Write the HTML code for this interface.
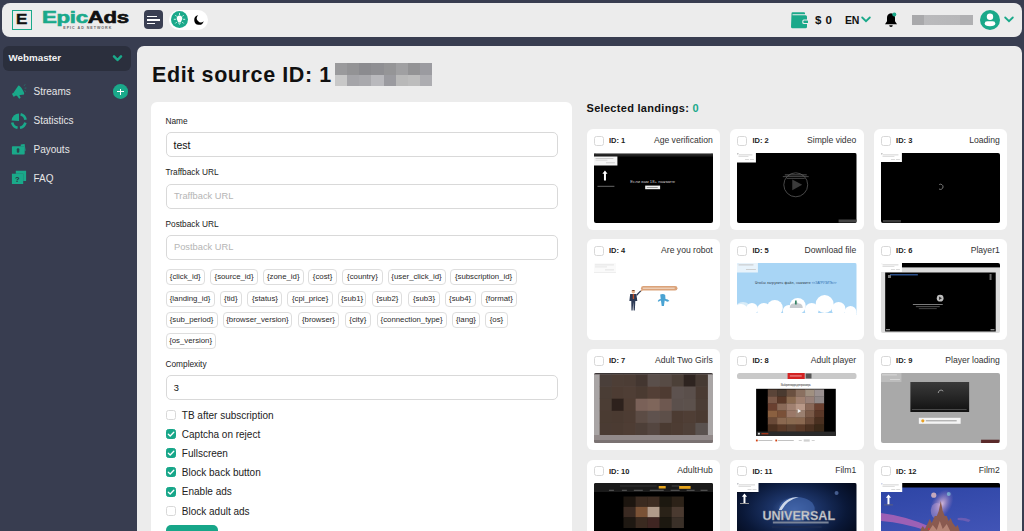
<!DOCTYPE html>
<html><head><meta charset="utf-8">
<style>
*{box-sizing:border-box;margin:0;padding:0}
html,body{width:1024px;height:531px;overflow:hidden}
body{background:#383d50;font-family:"Liberation Sans",sans-serif;position:relative;color:#1e1e24}
.a{position:absolute}
#hdr{left:2px;top:3px;width:1020px;height:33.5px;background:#ececec;border-radius:8px}
#main{left:137px;top:46px;width:885px;height:500px;background:#ececec;border-radius:7px}
#wm{left:3px;top:46px;width:128px;height:25px;background:#2b2f3d;border-radius:6px}
.card{background:#fff;border-radius:6px}
.lbl{font-size:8.3px;color:#222;line-height:10px;white-space:nowrap}
.inp{border:1px solid #d9d9d9;border-radius:5px;background:#fff;height:25px;width:392px;left:165.5px}
.ph{font-size:9.3px;color:#b5b5b5;line-height:12px;white-space:nowrap}
.chip{height:16px;border:1px solid #dedede;border-radius:4px;font-size:7.8px;color:#2a2a2a;line-height:14px;text-align:center;white-space:nowrap}
.cb{width:10px;height:10px;border:1px solid #d8d8d8;border-radius:2.5px;background:#fff}
.cb.on{background:#17a689;border-color:#17a689}
.cbl{font-size:10px;color:#222;white-space:nowrap}
.lc{width:133.5px;height:100.5px;background:#fff;border-radius:6px}
.lc .c{left:7.3px;top:6.6px;width:10px;height:10px;border:1px solid #d8d8d8;border-radius:2.5px}
.lc .id{left:22.5px;top:7px;font-size:7.5px;font-weight:bold;color:#222}
.lc .t{right:7.3px;top:5.8px;font-size:8.6px;color:#333;white-space:nowrap}
.lc .th{left:7.2px;top:23.5px;width:119.5px;height:70px;border-radius:2px;overflow:hidden;display:block}
</style></head><body>
<div id="hdr" class="a"></div>
<div class="a" style="left:12px;top:10px;width:20px;height:20px;border:1.2px solid #1aa98a"></div>
<div class="a" style="left:15.7px;top:9.3px;font-size:15.5px;font-weight:bold;color:#111;line-height:20px;transform:scaleX(1.1);transform-origin:0 0;-webkit-text-stroke:0.4px">E</div>
<div class="a" style="left:42px;top:8.3px;font-size:16px;font-weight:bold;line-height:20px;transform:scaleX(1.385);transform-origin:0 0;letter-spacing:-0.2px;-webkit-text-stroke:0.6px;white-space:nowrap"><span style="color:#1aa98a">Epic</span><span style="color:#111">Ads</span></div>
<div class="a" style="left:63.3px;top:25.8px;font-size:3.6px;font-weight:bold;color:#666;letter-spacing:1.0px;line-height:4px;white-space:nowrap">EPIC AD NETWORK</div>
<div class="a" style="left:143.5px;top:10px;width:19px;height:19px;background:#3a3f52;border-radius:4px"></div>
<div class="a" style="left:147px;top:15.5px;width:9.5px;height:1.5px;background:#fff"></div>
<div class="a" style="left:147px;top:19px;width:12.5px;height:1.5px;background:#fff"></div>
<div class="a" style="left:147px;top:22.7px;width:7.5px;height:1.5px;background:#fff"></div>
<div class="a" style="left:169px;top:10px;width:38.5px;height:19.5px;background:#fff;border-radius:10px"></div>
<div class="a" style="left:171px;top:11px;width:17px;height:17px;background:#1aa98a;border-radius:50%"></div>
<svg class="a" style="left:171px;top:11px" width="17" height="17" viewBox="0 0 17 17">
<g stroke="#fff" stroke-width="0.8" stroke-linecap="round">
<line x1="8.5" y1="2.3" x2="8.5" y2="3.6"/><line x1="3.2" y1="8.3" x2="4.5" y2="8.3"/><line x1="12.5" y1="8.3" x2="13.8" y2="8.3"/>
<line x1="4.6" y1="4.4" x2="5.5" y2="5.3"/><line x1="12.4" y1="4.4" x2="11.5" y2="5.3"/>
<line x1="4.6" y1="12.2" x2="5.5" y2="11.3"/><line x1="12.4" y1="12.2" x2="11.5" y2="11.3"/></g>
<path d="M8.5 4.6 C6.6 4.6 5.7 6 5.7 7.5 C5.7 9 6.8 9.8 7 11 L10 11 C10.2 9.8 11.3 9 11.3 7.5 C11.3 6 10.4 4.6 8.5 4.6Z M7.2 11.6 H9.8 V12.6 H7.2Z M7.8 13 H9.2 L8.5 13.8Z" fill="#fff"/>
</svg>
<svg class="a" style="left:193.5px;top:15px" width="10" height="10" viewBox="0 0 10 10"><path d="M4.2 0.3 A4.8 4.8 0 1 0 9.7 6.2 A3.9 3.9 0 0 1 4.2 0.3Z" fill="#000"/></svg>
<svg class="a" style="left:789.5px;top:12px" width="18" height="17" viewBox="0 0 18 17">
<path d="M1.5 1.5 Q1.5 0.3 2.7 0.3 H14 Q15 0.3 15 1.3 V2.2 H2.5 V3.2 H15.5 Q17 3.2 17 4.7 V14.8 Q17 16.3 15.5 16.3 H2.5 Q1 16.3 1 14.8 Z" fill="#1aa98a"/>
<rect x="12.3" y="7.6" width="6" height="4.4" rx="1.5" fill="#ececec"/><rect x="13.3" y="8.5" width="5" height="2.6" rx="1" fill="#1aa98a"/>
</svg>
<div class="a" style="left:815px;top:12.5px;font-size:11.5px;font-weight:bold;color:#111;line-height:14px;white-space:nowrap;letter-spacing:0.5px">$ 0</div>
<div class="a" style="left:845px;top:12.5px;font-size:10.5px;letter-spacing:-0.2px;font-weight:bold;color:#111;line-height:14px">EN</div>
<svg class="a" style="left:861px;top:16px" width="10" height="7" viewBox="0 0 10 7"><path d="M1.2 1.5 L5 5.2 L8.8 1.5" stroke="#1aa98a" stroke-width="1.8" fill="none" stroke-linecap="round"/></svg>
<svg class="a" style="left:884px;top:12px" width="14" height="16" viewBox="0 0 14 16">
<path d="M7 1.2 C4.3 1.2 3 3.4 3 5.8 V9.2 L1 12.2 H13 L11 9.2 V5.8 C11 3.4 9.7 1.2 7 1.2Z" fill="#000"/><path d="M5.2 13.2 A1.8 1.8 0 0 0 8.8 13.2Z" fill="#000"/>
<circle cx="10.3" cy="2.6" r="2" fill="#1aa98a"/></svg>
<div class="a" style="left:912px;top:15px;width:61px;height:10px;background:linear-gradient(90deg,#a9a9ab 0,#a9a9ab 12px,#bababc 12px,#b7b7b9 48px,#b0b0b2 48px)"></div>
<div class="a" style="left:979.8px;top:9.8px;width:20px;height:20px;background:#1aa98a;border-radius:50%"></div>
<svg class="a" style="left:979.8px;top:9.8px" width="20" height="20" viewBox="0 0 20 20"><circle cx="10" cy="6.8" r="3.2" fill="#fff"/><path d="M4.7 13.6 Q4.7 11.2 7.2 11.2 H12.8 Q15.3 11.2 15.3 13.6 Q15.3 16.2 10 16.2 Q4.7 16.2 4.7 13.6Z" fill="#fff"/></svg>
<svg class="a" style="left:1004px;top:16px" width="10" height="7" viewBox="0 0 10 7"><path d="M1.2 1.5 L5 5.2 L8.8 1.5" stroke="#1aa98a" stroke-width="1.8" fill="none" stroke-linecap="round"/></svg>
<div id="wm" class="a"></div>
<div class="a" style="left:8.5px;top:51.3px;font-size:9.8px;font-weight:bold;color:#f2f2f2;line-height:14px">Webmaster</div>
<svg class="a" style="left:112px;top:54.3px" width="11" height="9" viewBox="0 0 11 9"><path d="M2 2.4 L5.5 6 L9 2.4" stroke="#1aa98a" stroke-width="2.5" fill="none" stroke-linecap="round" stroke-linejoin="round"/></svg>
<div class="a" style="left:33.5px;top:85.2px;font-size:10px;color:#e6e6e6;line-height:14px">Streams</div>
<div class="a" style="left:33.5px;top:114.4px;font-size:10px;color:#e6e6e6;line-height:14px">Statistics</div>
<div class="a" style="left:33.5px;top:143.4px;font-size:10px;color:#e6e6e6;line-height:14px">Payouts</div>
<div class="a" style="left:33.5px;top:172.0px;font-size:10px;color:#e6e6e6;line-height:14px">FAQ</div>
<div class="a" style="left:113.2px;top:84.4px;width:14.6px;height:14.6px;border-radius:50%;background:#1aa98a"></div>
<div class="a" style="left:117.3px;top:91.1px;width:6.4px;height:1.2px;background:#fff"></div>
<div class="a" style="left:119.9px;top:88.5px;width:1.2px;height:6.4px;background:#fff"></div>
<svg class="a" style="left:11px;top:84px" width="16" height="16" viewBox="0 0 16 16">
<g transform="rotate(-32 7 8)" fill="#1aa98a"><rect x="0.8" y="6.3" width="2.6" height="3.6" rx="0.6"/><path d="M3 6.2 L10.5 2.8 L10.5 13.2 L3 9.9Z"/><ellipse cx="10.6" cy="8" rx="1.4" ry="5.2"/><path d="M4 9.5 L6.6 10.6 L6.2 14.4 L4.4 14.4Z"/></g>
<path d="M12.8 1.6 L14.4 0.6 M13.6 4.2 L15.4 4 M13.4 6.6 L15 7.6" stroke="#1aa98a" stroke-width="0.8" opacity="0.55"/></svg>
<svg class="a" style="left:11px;top:113px" width="16" height="16" viewBox="0 0 16 16">
<path d="M8 8 L8 0.6 A7.4 7.4 0 0 0 0.6 7.6Z" fill="#1aa98a"/>
<path d="M9.6 1.3 A7 7 0 0 1 14.6 6.8" stroke="#1aa98a" stroke-width="2.6" fill="none"/>
<path d="M14.4 9.6 A7 7 0 0 1 9 14.8" stroke="#1aa98a" stroke-width="2.6" fill="none"/>
<path d="M6.6 14.8 A7 7 0 0 1 1.2 9.4" stroke="#1aa98a" stroke-width="2.6" fill="none"/>
</svg>
<svg class="a" style="left:11px;top:142px" width="16" height="15" viewBox="0 0 16 15">
<rect x="0.9" y="4.3" width="12.8" height="8.3" rx="0.8" fill="#1aa98a"/>
<path d="M9.7 2.4 L13.6 1.9 L14.6 8.7 L13.7 8.7 L13.2 4.3 L9.7 4.3Z" fill="#1aa98a"/>
<rect x="5.8" y="6.3" width="2.5" height="4.4" rx="1" fill="#2c3140" opacity="0.8"/></svg>
<svg class="a" style="left:11px;top:170px" width="16" height="16" viewBox="0 0 16 16">
<path d="M4.8 0.8 H15.1 V11.1 H12.2 V3.7 H4.8Z" fill="#1aa98a"/>
<rect x="0.9" y="3.7" width="11.3" height="10.3" fill="#1aa98a"/>
<text x="6.4" y="11.6" font-size="7.5" font-weight="bold" fill="#2c3140" text-anchor="middle" font-family="Liberation Sans">?</text></svg>
<div id="main" class="a"></div>
<div class="a" style="left:152px;top:60px;font-size:21.5px;font-weight:bold;color:#111;line-height:30px;letter-spacing:0.6px;white-space:nowrap">Edit source ID: 1</div>
<div class="a" style="left:335px;top:63px;width:97px;height:23px;display:grid;grid-template-columns:repeat(8,1fr);grid-template-rows:11.5px 11.5px">
<i style="background:#9a9a9c"></i><i style="background:#939395"></i><i style="background:#8b8b8f"></i><i style="background:#8f8f93"></i><i style="background:#959597"></i><i style="background:#a0a0a2"></i><i style="background:#939395"></i><i style="background:#9b9ba0"></i>
<i style="background:#c8c8c8"></i><i style="background:#a5a5a9"></i><i style="background:#a9a9ad"></i><i style="background:#b9b9bd"></i><i style="background:#9b9ba0"></i><i style="background:#b9b9b9"></i><i style="background:#bdbdbd"></i><i style="background:#adadb1"></i>
</div>
<div class="a card" style="left:151px;top:101.5px;width:421px;height:460px"></div>
<div class="a lbl" style="left:165.5px;top:115.5px">Name</div>
<div class="a inp" style="top:132.3px"></div>
<div class="a" style="left:173.5px;top:137.8px;font-size:10.5px;color:#111;line-height:14px">test</div>
<div class="a lbl" style="left:165.5px;top:167.2px">Traffback URL</div>
<div class="a inp" style="top:183.7px"></div>
<div class="a ph" style="left:174px;top:190.2px">Traffback URL</div>
<div class="a lbl" style="left:165.5px;top:218.6px">Postback URL</div>
<div class="a inp" style="top:234.7px"></div>
<div class="a ph" style="left:174px;top:241.2px">Postback URL</div>
<div class="a chip" style="left:165.5px;top:269.4px;width:39.4px">{click_id}</div>
<div class="a chip" style="left:210.4px;top:269.4px;width:47.3px">{source_id}</div>
<div class="a chip" style="left:262.9px;top:269.4px;width:40.7px">{zone_id}</div>
<div class="a chip" style="left:308.4px;top:269.4px;width:28.4px">{cost}</div>
<div class="a chip" style="left:342.3px;top:269.4px;width:40.3px">{country}</div>
<div class="a chip" style="left:387.5px;top:269.4px;width:58.0px">{user_click_id}</div>
<div class="a chip" style="left:450.3px;top:269.4px;width:66.5px">{subscription_id}</div>
<div class="a chip" style="left:165.5px;top:290.7px;width:49.2px">{landing_id}</div>
<div class="a chip" style="left:219.6px;top:290.7px;width:22.4px">{tid}</div>
<div class="a chip" style="left:247.3px;top:290.7px;width:35.2px">{status}</div>
<div class="a chip" style="left:287.3px;top:290.7px;width:45.6px">{cpl_price}</div>
<div class="a chip" style="left:337.7px;top:290.7px;width:28.7px">{sub1}</div>
<div class="a chip" style="left:372.2px;top:290.7px;width:30.3px">{sub2}</div>
<div class="a chip" style="left:408.4px;top:290.7px;width:31.2px">{sub3}</div>
<div class="a chip" style="left:444.5px;top:290.7px;width:31.2px">{sub4}</div>
<div class="a chip" style="left:481px;top:290.7px;width:36.3px">{format}</div>
<div class="a chip" style="left:165.5px;top:312.1px;width:52.1px">{sub_period}</div>
<div class="a chip" style="left:222.5px;top:312.1px;width:69.9px">{browser_version}</div>
<div class="a chip" style="left:297.7px;top:312.1px;width:41.6px">{browser}</div>
<div class="a chip" style="left:344.6px;top:312.1px;width:26.4px">{city}</div>
<div class="a chip" style="left:376.5px;top:312.1px;width:70.1px">{connection_type}</div>
<div class="a chip" style="left:452px;top:312.1px;width:28.0px">{lang}</div>
<div class="a chip" style="left:485.3px;top:312.1px;width:22.4px">{os}</div>
<div class="a chip" style="left:165.5px;top:333.2px;width:50.2px">{os_version}</div>
<div class="a lbl" style="left:165.5px;top:358.8px">Complexity</div>
<div class="a inp" style="top:375px"></div>
<div class="a" style="left:173.8px;top:382.3px;font-size:9.3px;color:#111;line-height:12px">3</div>
<div class="a cb" style="left:165.5px;top:410.0px"></div>
<div class="a cbl" style="left:181.8px;top:409.5px;line-height:12px">TB after subscription</div>
<div class="a cb on" style="left:165.5px;top:429.1px"></div>
<svg class="a" style="left:165.5px;top:429.1px" width="10" height="10" viewBox="0 0 10 10"><path d="M2.3 5.2 L4.2 7 L7.8 3.2" stroke="#fff" stroke-width="1.3" fill="none" stroke-linecap="round" stroke-linejoin="round"/></svg>
<div class="a cbl" style="left:181.8px;top:428.7px;line-height:12px">Captcha on reject</div>
<div class="a cb on" style="left:165.5px;top:448.2px"></div>
<svg class="a" style="left:165.5px;top:448.2px" width="10" height="10" viewBox="0 0 10 10"><path d="M2.3 5.2 L4.2 7 L7.8 3.2" stroke="#fff" stroke-width="1.3" fill="none" stroke-linecap="round" stroke-linejoin="round"/></svg>
<div class="a cbl" style="left:181.8px;top:447.9px;line-height:12px">Fullscreen</div>
<div class="a cb on" style="left:165.5px;top:467.4px"></div>
<svg class="a" style="left:165.5px;top:467.4px" width="10" height="10" viewBox="0 0 10 10"><path d="M2.3 5.2 L4.2 7 L7.8 3.2" stroke="#fff" stroke-width="1.3" fill="none" stroke-linecap="round" stroke-linejoin="round"/></svg>
<div class="a cbl" style="left:181.8px;top:467.2px;line-height:12px">Block back button</div>
<div class="a cb on" style="left:165.5px;top:486.5px"></div>
<svg class="a" style="left:165.5px;top:486.5px" width="10" height="10" viewBox="0 0 10 10"><path d="M2.3 5.2 L4.2 7 L7.8 3.2" stroke="#fff" stroke-width="1.3" fill="none" stroke-linecap="round" stroke-linejoin="round"/></svg>
<div class="a cbl" style="left:181.8px;top:486.4px;line-height:12px">Enable ads</div>
<div class="a cb" style="left:165.5px;top:505.6px"></div>
<div class="a cbl" style="left:181.8px;top:505.6px;line-height:12px">Block adult ads</div>
<div class="a" style="left:165.5px;top:525px;width:52.5px;height:20px;background:#17a689;border-radius:5px"></div>
<!--LAND-->
<div class="a" style="left:586.5px;top:100.5px;font-size:11px;font-weight:bold;color:#111;line-height:14px;letter-spacing:0.3px;white-space:nowrap">Selected landings: <span style="color:#1aa98a">0</span></div>
<div class="a lc" style="left:586.5px;top:129.2px"><div class="a c"></div><div class="a id">ID: 1</div><div class="a t">Age verification</div><svg class="a th" viewBox="0 0 120 70" preserveAspectRatio="none"><rect x="0" y="0" width="120" height="70" fill="#000" /><rect x="0" y="0" width="120" height="3.5" fill="#1e1e1e" /><rect x="0" y="0" width="120" height="1.1" fill="#8a8a8a" /><rect x="0" y="3.5" width="23.5" height="9" fill="#f4f4f4" /><rect x="1.5" y="5" width="18" height="0.7" fill="#bbb" /><rect x="1.5" y="6.8" width="12" height="0.7" fill="#ccc" /><rect x="12" y="9.5" width="9" height="0.7" fill="#bbb" /><path d="M11 17.5 L8.4 20.7 H10 V27.5 H12 V20.7 H13.6Z" fill="#fff"/><rect x="3.5" y="32.8" width="17" height="1" fill="#666" /><text x="59" y="30.3" font-family="Liberation Sans" font-size="4.2" fill="#c8c8c8" text-anchor="middle" textLength="45">Если вам 18+ нажмите</text><rect x="51.4" y="32.6" width="15" height="3.6" fill="#f0f0f0" /><rect x="53" y="34" width="11" height="0.8" fill="#888" /></svg></div>
<div class="a lc" style="left:730px;top:129.2px"><div class="a c"></div><div class="a id">ID: 2</div><div class="a t">Simple video</div><svg class="a th" viewBox="0 0 120 70" preserveAspectRatio="none"><rect x="0" y="0" width="120" height="70" fill="#000" /><rect x="0" y="0" width="19" height="9.5" fill="#fff" /><rect x="1.5" y="1.5" width="14" height="0.8" fill="#c8c8c8" /><rect x="1.5" y="3.2" width="10" height="0.8" fill="#d8d8d8" /><rect x="8" y="6" width="4" height="0.8" fill="#d0d0d0" /><rect x="13" y="6" width="4" height="0.8" fill="#d0d0d0" /><circle cx="59" cy="31.8" r="12" fill="none" stroke="#505050" stroke-width="0.9"/><path d="M55.5 26.5 L65.5 31.8 L55.5 37.2Z" fill="#3a3a3a"/><rect x="48" y="21.5" width="22" height="0.8" fill="#6a6a6a" /><rect x="46" y="23.3" width="26" height="0.8" fill="#5a5a5a" /><rect x="50" y="25.1" width="18" height="0.8" fill="#4a4a4a" /><rect x="102" y="66.5" width="18" height="3" fill="#444" /></svg></div>
<div class="a lc" style="left:873.6px;top:129.2px"><div class="a c"></div><div class="a id">ID: 3</div><div class="a t">Loading</div><svg class="a th" viewBox="0 0 120 70" preserveAspectRatio="none"><rect x="0" y="0" width="120" height="70" fill="#000" /><rect x="0" y="0" width="21" height="9" fill="#fff" /><rect x="1.5" y="1.5" width="16" height="0.8" fill="#c8c8c8" /><rect x="1.5" y="3.2" width="12" height="0.8" fill="#d8d8d8" /><rect x="10" y="6" width="4" height="0.8" fill="#d0d0d0" /><rect x="15" y="6" width="4" height="0.8" fill="#d0d0d0" /><path d="M58.5 31.5 A2.6 2.6 0 1 1 58.3 36" fill="none" stroke="#888" stroke-width="0.9"/><rect x="2" y="67" width="18" height="2.5" fill="#3a3a3a" /></svg></div>
<div class="a lc" style="left:586.5px;top:239.3px"><div class="a c"></div><div class="a id">ID: 4</div><div class="a t">Are you robot</div><svg class="a th" viewBox="0 0 120 70" preserveAspectRatio="none"><rect x="0" y="0" width="120" height="70" fill="#fff" /><rect x="0" y="0" width="22" height="10" fill="#fafafa" /><rect x="1" y="1.5" width="19" height="0.8" fill="#ddd" /><rect x="1" y="3.5" width="12" height="0.8" fill="#e2e2e2" /><rect x="11" y="6.5" width="9" height="0.8" fill="#ddd" /><rect x="0" y="9.2" width="22" height="0.6" fill="#e6e6e6" /><rect x="47.2" y="22.9" width="36.6" height="4.7" rx="2.3" fill="#dba37a"/><rect x="49" y="24.6" width="32" height="1.2" fill="#f0d8c4" /><path d="M47.5 26.5 L45.5 30 L49.5 27Z" fill="#dba37a"/><circle cx="39.5" cy="28.8" r="1.8" fill="#e8b48f"/><path d="M37.6 28 Q39.5 25.8 41.4 28Z" fill="#6b3c22"/><path d="M36.3 31 H42.5 L43.5 38 H41.5 L41 47.5 H39.8 L39.4 39 L38.8 47.5 H37.6 L37.4 38 H35.5Z" fill="#2d3a55"/><rect x="38.9" y="31" width="1.4" height="5" fill="#c0532b" /><path d="M42.5 31.5 L46.5 27.5 L47.3 28.2 L43 33Z" fill="#2d3a55"/><path d="M66.5 31.5 Q69.8 30.5 71.5 32 L71.8 36 Q74.5 36 75.8 38 L73.5 38.8 L71 37.5 L70.2 43 L68 43 L67.2 37.5 L64.5 38.8 L64 38 Q65 36 67 36Z" fill="#4aa3d3"/></svg></div>
<div class="a lc" style="left:730px;top:239.3px"><div class="a c"></div><div class="a id">ID: 5</div><div class="a t">Download file</div><svg class="a th" viewBox="0 0 120 70" preserveAspectRatio="none"><rect x="0" y="0" width="120" height="70" fill="#fff" /><rect x="0" y="0" width="120" height="52" fill="#a8d5f5" /><ellipse cx="6" cy="46" rx="8" ry="7" fill="#d8ecf8"/><circle cx="4" cy="48" r="7" fill="#fff"/><circle cx="15" cy="46" r="6" fill="#fff"/><circle cx="27" cy="47" r="7" fill="#fff"/><circle cx="38" cy="45" r="8" fill="#fff"/><circle cx="52" cy="48" r="6" fill="#fff"/><circle cx="61" cy="43" r="8" fill="#fff"/><circle cx="75" cy="47" r="7" fill="#fff"/><circle cx="88" cy="41" r="9" fill="#fff"/><circle cx="102" cy="46" r="7" fill="#fff"/><circle cx="114" cy="49" r="6" fill="#fff"/><rect x="0" y="50" width="120" height="20" fill="#fff" /><rect x="0" y="0" width="21" height="9.5" fill="#e8f3fb" /><rect x="1.5" y="1.5" width="15" height="0.8" fill="#bbb" /><rect x="9" y="6" width="10" height="0.8" fill="#c6c6c6" /><text x="18" y="21" font-family="Liberation Sans" font-size="3.4" fill="#2a3440" textLength="56">Чтобы загрузить файл, нажмите</text><text x="75" y="21" font-family="Liberation Sans" font-size="3.4" fill="#2f6fb0" textLength="25">&lt;&lt;ЗАГРУЗИТЬ&gt;&gt;</text><path d="M53 45 Q53 40.5 57 40.5 Q59 38 62 40.5 Q66 40.5 66 45Z" fill="#c8ccd0"/><rect x="58.3" y="37.5" width="1.6" height="4" fill="#2d7f5e" /></svg></div>
<div class="a lc" style="left:873.6px;top:239.3px"><div class="a c"></div><div class="a id">ID: 6</div><div class="a t">Player1</div><svg class="a th" viewBox="0 0 120 70" preserveAspectRatio="none"><rect x="0" y="0" width="120" height="70" fill="#dcdcdc" /><rect x="21" y="0" width="99" height="4.4" fill="#000" /><rect x="0" y="0" width="21" height="9" fill="#fff" /><rect x="1.5" y="1.5" width="16" height="0.8" fill="#c8c8c8" /><rect x="1.5" y="3.2" width="12" height="0.8" fill="#d8d8d8" /><rect x="10" y="6" width="4" height="0.8" fill="#d0d0d0" /><rect x="15" y="6" width="4" height="0.8" fill="#d0d0d0" /><rect x="4.2" y="9.5" width="111" height="59" fill="#000" /><rect x="9" y="11" width="28" height="1.5" fill="#2a4f8a" /><rect x="7" y="12" width="3" height="3" fill="#777" /><rect x="109" y="11" width="2" height="6" fill="#666" /><circle cx="59.4" cy="35.2" r="3.4" fill="#bdbdbd"/><path d="M58.3 33.5 L61.2 35.2 L58.3 36.9Z" fill="#333"/><rect x="32" y="41" width="30" height="0.8" fill="#9a9a9a" /><rect x="35" y="43.3" width="24" height="0.8" fill="#6a6a6a" /><rect x="38" y="45.3" width="18" height="0.8" fill="#555" /><rect x="5" y="66" width="4" height="1.4" fill="#888" /><rect x="110" y="66" width="4" height="1.4" fill="#888" /></svg></div>
<div class="a lc" style="left:586.5px;top:349.4px"><div class="a c"></div><div class="a id">ID: 7</div><div class="a t">Adult Two Girls</div><svg class="a th" viewBox="0 0 120 70" preserveAspectRatio="none"><rect x="0" y="0" width="120" height="70" fill="#8e8686" /><rect x="0" y="0" width="120" height="1.5" fill="#3a3535" /><rect x="0" y="1.5" width="6" height="62" fill="#a9a5a5" /><rect x="114" y="1.5" width="6" height="62" fill="#a9a5a5" /><rect x="5.70" y="1.50" width="12.34" height="12.40" fill="#4a3f3a" /><rect x="17.74" y="1.50" width="12.34" height="12.40" fill="#4d3e36" /><rect x="29.78" y="1.50" width="12.34" height="12.40" fill="#4c3d35" /><rect x="41.82" y="1.50" width="12.34" height="12.40" fill="#433630" /><rect x="53.86" y="1.50" width="12.34" height="12.40" fill="#5a4f4b" /><rect x="65.90" y="1.50" width="12.34" height="12.40" fill="#574b45" /><rect x="77.94" y="1.50" width="12.34" height="12.40" fill="#4c4038" /><rect x="89.98" y="1.50" width="12.34" height="12.40" fill="#2e2420" /><rect x="102.02" y="1.50" width="12.34" height="12.40" fill="#463a33" /><rect x="5.70" y="13.60" width="12.34" height="12.40" fill="#4a3d35" /><rect x="17.74" y="13.60" width="12.34" height="12.40" fill="#4d3c33" /><rect x="29.78" y="13.60" width="12.34" height="12.40" fill="#4f3e35" /><rect x="41.82" y="13.60" width="12.34" height="12.40" fill="#4a3a31" /><rect x="53.86" y="13.60" width="12.34" height="12.40" fill="#533f36" /><rect x="65.90" y="13.60" width="12.34" height="12.40" fill="#4e3b32" /><rect x="77.94" y="13.60" width="12.34" height="12.40" fill="#5d524f" /><rect x="89.98" y="13.60" width="12.34" height="12.40" fill="#5a4f4b" /><rect x="102.02" y="13.60" width="12.34" height="12.40" fill="#4a3b33" /><rect x="5.70" y="25.70" width="12.34" height="12.40" fill="#4b3d34" /><rect x="17.74" y="25.70" width="12.34" height="12.40" fill="#2d211c" /><rect x="29.78" y="25.70" width="12.34" height="12.40" fill="#4f3d33" /><rect x="41.82" y="25.70" width="12.34" height="12.40" fill="#7a6158" /><rect x="53.86" y="25.70" width="12.34" height="12.40" fill="#7f665b" /><rect x="65.90" y="25.70" width="12.34" height="12.40" fill="#6e5850" /><rect x="77.94" y="25.70" width="12.34" height="12.40" fill="#5b504c" /><rect x="89.98" y="25.70" width="12.34" height="12.40" fill="#5c514c" /><rect x="102.02" y="25.70" width="12.34" height="12.40" fill="#4b3d35" /><rect x="5.70" y="37.80" width="12.34" height="12.40" fill="#4a3b32" /><rect x="17.74" y="37.80" width="12.34" height="12.40" fill="#4a3a31" /><rect x="29.78" y="37.80" width="12.34" height="12.40" fill="#4d3c33" /><rect x="41.82" y="37.80" width="12.34" height="12.40" fill="#5c4c45" /><rect x="53.86" y="37.80" width="12.34" height="12.40" fill="#5f524e" /><rect x="65.90" y="37.80" width="12.34" height="12.40" fill="#5d4f49" /><rect x="77.94" y="37.80" width="12.34" height="12.40" fill="#4c3b32" /><rect x="89.98" y="37.80" width="12.34" height="12.40" fill="#4f3e35" /><rect x="102.02" y="37.80" width="12.34" height="12.40" fill="#4a3a31" /><rect x="5.70" y="49.90" width="12.34" height="12.40" fill="#4a3b33" /><rect x="17.74" y="49.90" width="12.34" height="12.40" fill="#4b3b32" /><rect x="29.78" y="49.90" width="12.34" height="12.40" fill="#4e3d34" /><rect x="41.82" y="49.90" width="12.34" height="12.40" fill="#4d3f38" /><rect x="53.86" y="49.90" width="12.34" height="12.40" fill="#544640" /><rect x="65.90" y="49.90" width="12.34" height="12.40" fill="#4a3a31" /><rect x="77.94" y="49.90" width="12.34" height="12.40" fill="#4d3c33" /><rect x="89.98" y="49.90" width="12.34" height="12.40" fill="#4f4038" /><rect x="102.02" y="49.90" width="12.34" height="12.40" fill="#5a524f" /><rect x="0" y="62" width="120" height="8" fill="#928a8a" /><rect x="0" y="67" width="120" height="3" fill="#7a7272" /></svg></div>
<div class="a lc" style="left:730px;top:349.4px"><div class="a c"></div><div class="a id">ID: 8</div><div class="a t">Adult player</div><svg class="a th" viewBox="0 0 120 70" preserveAspectRatio="none"><rect x="0" y="0" width="120" height="70" fill="#fff" /><rect x="0" y="0" width="120" height="6" rx="2" fill="#c9c9c9"/><rect x="50.8" y="0" width="17.2" height="6" fill="#d32222" /><rect x="53" y="2.5" width="12" height="0.9" fill="#f3b0b0" /><rect x="69" y="0.5" width="5.8" height="5" fill="#555" /><text x="59" y="13" font-family="Liberation Sans" font-size="3" fill="#555" text-anchor="middle" textLength="30">Выберите видео для просмотра</text><rect x="19.2" y="15.8" width="80" height="47" fill="#000" /><rect x="30.90" y="16.40" width="9.68" height="7.33" fill="#5a4438" /><rect x="40.28" y="16.40" width="9.68" height="7.33" fill="#4a3a30" /><rect x="49.66" y="16.40" width="9.68" height="7.33" fill="#6a5040" /><rect x="59.04" y="16.40" width="9.68" height="7.33" fill="#8a7060" /><rect x="68.42" y="16.40" width="9.68" height="7.33" fill="#a09080" /><rect x="77.80" y="16.40" width="9.68" height="7.33" fill="#9a9090" /><rect x="30.90" y="23.43" width="9.68" height="7.33" fill="#7a5848" /><rect x="40.28" y="23.43" width="9.68" height="7.33" fill="#5a3828" /><rect x="49.66" y="23.43" width="9.68" height="7.33" fill="#8a6a50" /><rect x="59.04" y="23.43" width="9.68" height="7.33" fill="#a08070" /><rect x="68.42" y="23.43" width="9.68" height="7.33" fill="#988078" /><rect x="77.80" y="23.43" width="9.68" height="7.33" fill="#908888" /><rect x="30.90" y="30.46" width="9.68" height="7.33" fill="#6a4030" /><rect x="40.28" y="30.46" width="9.68" height="7.33" fill="#8a6a58" /><rect x="49.66" y="30.46" width="9.68" height="7.33" fill="#a08070" /><rect x="59.04" y="30.46" width="9.68" height="7.33" fill="#b89888" /><rect x="68.42" y="30.46" width="9.68" height="7.33" fill="#8a6858" /><rect x="77.80" y="30.46" width="9.68" height="7.33" fill="#6a4030" /><rect x="30.90" y="37.49" width="9.68" height="7.33" fill="#8a6040" /><rect x="40.28" y="37.49" width="9.68" height="7.33" fill="#7a5038" /><rect x="49.66" y="37.49" width="9.68" height="7.33" fill="#9a7868" /><rect x="59.04" y="37.49" width="9.68" height="7.33" fill="#9a8070" /><rect x="68.42" y="37.49" width="9.68" height="7.33" fill="#7a5a48" /><rect x="77.80" y="37.49" width="9.68" height="7.33" fill="#5a3828" /><rect x="30.90" y="44.52" width="9.68" height="7.33" fill="#6a4a38" /><rect x="40.28" y="44.52" width="9.68" height="7.33" fill="#8a6850" /><rect x="49.66" y="44.52" width="9.68" height="7.33" fill="#8a6a50" /><rect x="59.04" y="44.52" width="9.68" height="7.33" fill="#8a6850" /><rect x="68.42" y="44.52" width="9.68" height="7.33" fill="#6a4a38" /><rect x="77.80" y="44.52" width="9.68" height="7.33" fill="#4a3020" /><rect x="30.90" y="51.55" width="9.68" height="7.33" fill="#4a3020" /><rect x="40.28" y="51.55" width="9.68" height="7.33" fill="#5a3a28" /><rect x="49.66" y="51.55" width="9.68" height="7.33" fill="#5a4030" /><rect x="59.04" y="51.55" width="9.68" height="7.33" fill="#5a3a28" /><rect x="68.42" y="51.55" width="9.68" height="7.33" fill="#4a3020" /><rect x="77.80" y="51.55" width="9.68" height="7.33" fill="#3a2818" /><path d="M61 36 L64.5 38 L61 40Z" fill="#f0f0f0"/><rect x="19.2" y="58.6" width="80" height="4.3" fill="#2a2a2a" /><rect x="21" y="59.8" width="2" height="1.8" fill="#ddd" /><rect x="24.5" y="60.2" width="7" height="1.1" fill="#c03a1a" /><rect x="19" y="66.6" width="1.8" height="1.8" fill="#d04010" /><rect x="21.5" y="67" width="14" height="0.9" fill="#bbb" /><rect x="38.5" y="66.6" width="1.8" height="1.8" fill="#d04010" /><rect x="41" y="67" width="16" height="0.9" fill="#bbb" /><rect x="62" y="67" width="3" height="0.9" fill="#ccc" /><rect x="67" y="66.4" width="6" height="2.2" fill="#d0d0d0" /><rect x="75" y="67" width="3" height="0.9" fill="#ccc" /></svg></div>
<div class="a lc" style="left:873.6px;top:349.4px"><div class="a c"></div><div class="a id">ID: 9</div><div class="a t">Player loading</div><svg class="a th" viewBox="0 0 120 70" preserveAspectRatio="none"><defs><linearGradient id="g9" x1="0" y1="0" x2="0" y2="1"><stop offset="0" stop-color="#3a3a3a"/><stop offset="0.6" stop-color="#222"/><stop offset="1" stop-color="#111"/></linearGradient></defs><rect x="0" y="0" width="120" height="70" fill="#a9a9a9" /><rect x="0" y="0" width="20.5" height="9" fill="#bcbcbc" /><rect x="1" y="1.5" width="15" height="0.8" fill="#ddd" /><rect x="9" y="6" width="10" height="0.8" fill="#ddd" /><rect x="29.5" y="9" width="59" height="30" fill="url(#g9)" /><rect x="31" y="36" width="55" height="0.8" fill="#555" /><path d="M57.5 20 A2.8 2.8 0 0 1 62.5 18.2" fill="none" stroke="#9a9a9a" stroke-width="1"/><rect x="38" y="44.8" width="42" height="6" fill="#f4f4f4" /><circle cx="42" cy="47.8" r="1.6" fill="#e8a020"/><rect x="45" y="47.3" width="31" height="1" fill="#999" /><rect x="100.5" y="66.7" width="18.5" height="3.3" fill="#5a2a2a" /></svg></div>
<div class="a lc" style="left:586.5px;top:459.5px"><div class="a c"></div><div class="a id">ID: 10</div><div class="a t">AdultHub</div><svg class="a th" viewBox="0 0 120 70" preserveAspectRatio="none"><rect x="0" y="0" width="120" height="70" fill="#000" /><rect x="0" y="0" width="120" height="9" fill="#1a1a1a" /><rect x="26" y="2.5" width="37" height="1" fill="#333" /><rect x="65" y="3" width="7" height="2.5" fill="#e7a51d" /><rect x="78" y="2.5" width="8" height="1" fill="#444" /><rect x="85.5" y="3" width="11.5" height="2.8" fill="#e7a51d" /><rect x="15" y="6.8" width="5" height="0.9" fill="#666" /><rect x="28" y="6.8" width="5" height="0.9" fill="#666" /><rect x="40" y="6.8" width="9" height="0.9" fill="#666" /><rect x="56" y="6.8" width="14" height="0.9" fill="#666" /><rect x="77" y="6.8" width="9" height="0.9" fill="#666" /><rect x="93" y="6.8" width="8" height="0.9" fill="#666" /><rect x="107" y="6.8" width="7" height="0.9" fill="#666" /><rect x="29.60" y="13.50" width="12.38" height="10.70" fill="#1c150f" /><rect x="41.68" y="13.50" width="12.38" height="10.70" fill="#3a2a20" /><rect x="53.76" y="13.50" width="12.38" height="10.70" fill="#3d2c22" /><rect x="65.84" y="13.50" width="12.38" height="10.70" fill="#1c1810" /><rect x="77.92" y="13.50" width="12.38" height="10.70" fill="#2c2218" /><rect x="29.60" y="23.90" width="12.38" height="10.70" fill="#3a2a22" /><rect x="41.68" y="23.90" width="12.38" height="10.70" fill="#7a5236" /><rect x="53.76" y="23.90" width="12.38" height="10.70" fill="#b09a8a" /><rect x="65.84" y="23.90" width="12.38" height="10.70" fill="#2a2218" /><rect x="77.92" y="23.90" width="12.38" height="10.70" fill="#4a3a30" /><rect x="29.60" y="34.30" width="12.38" height="10.70" fill="#1e1812" /><rect x="41.68" y="34.30" width="12.38" height="10.70" fill="#3a2a20" /><rect x="53.76" y="34.30" width="12.38" height="10.70" fill="#3f2522" /><rect x="65.84" y="34.30" width="12.38" height="10.70" fill="#1c1810" /><rect x="77.92" y="34.30" width="12.38" height="10.70" fill="#3a3028" /></svg></div>
<div class="a lc" style="left:730px;top:459.5px"><div class="a c"></div><div class="a id">ID: 11</div><div class="a t">Film1</div><svg class="a th" viewBox="0 0 120 70" preserveAspectRatio="none"><defs><radialGradient id="g11" cx="0.48" cy="0.38" r="0.62"><stop offset="0" stop-color="#4a6aa8"/><stop offset="0.3" stop-color="#1c3468"/><stop offset="0.7" stop-color="#0a1838"/><stop offset="1" stop-color="#040a1c"/></radialGradient></defs><rect x="0" y="0" width="120" height="70" fill="url(#g11)" /><ellipse cx="60" cy="26" rx="18" ry="12" fill="#3f62a8" opacity="0.7"/><path d="M42 27 Q48 14 62 14 Q50 17 45 27Z" fill="#e8eef8" opacity="0.85"/><circle cx="100" cy="10" r="2" fill="#6a8ac8" opacity="0.6"/><rect x="0" y="0" width="21.6" height="9" fill="#fff" /><rect x="1.5" y="1.5" width="16.6" height="0.8" fill="#c8c8c8" /><rect x="1.5" y="3.2" width="12.600000000000001" height="0.8" fill="#d8d8d8" /><rect x="10.600000000000001" y="6" width="4" height="0.8" fill="#d0d0d0" /><rect x="15.600000000000001" y="6" width="4" height="0.8" fill="#d0d0d0" /><rect x="0" y="9" width="21.6" height="0.2" fill="#000" /><path d="M7.5 10.5 L4.9 13.7 H6.5 V20.5 H8.5 V13.7 H10.1Z" fill="#fff"/><rect x="3" y="20" width="9" height="1" fill="#999" /><text x="62" y="37" font-family="Liberation Sans" font-weight="bold" font-size="12.5" fill="#c8ccd4" text-anchor="middle" textLength="73" stroke="#888" stroke-width="0.3" lengthAdjust="spacingAndGlyphs">UNIVERSAL</text><rect x="36" y="38.5" width="56" height="2" fill="#7a8498" /><rect x="35" y="43" width="50" height="2" fill="#1a2a50" /></svg></div>
<div class="a lc" style="left:873.6px;top:459.5px"><div class="a c"></div><div class="a id">ID: 12</div><div class="a t">Film2</div><svg class="a th" viewBox="0 0 120 70" preserveAspectRatio="none"><defs><linearGradient id="g12" x1="0" y1="0" x2="0.3" y2="1"><stop offset="0" stop-color="#2c44a4"/><stop offset="1" stop-color="#4456b8"/></linearGradient><radialGradient id="fw" cx="0.5" cy="0.5" r="0.5"><stop offset="0" stop-color="#e8c8e0" stop-opacity="0.9"/><stop offset="1" stop-color="#b080c0" stop-opacity="0"/></radialGradient></defs><rect x="0" y="0" width="120" height="70" fill="url(#g12)" /><rect x="21" y="0" width="99" height="4.5" fill="#000" /><rect x="0" y="0" width="21.3" height="9" fill="#fff" /><rect x="1.5" y="1.5" width="16.3" height="0.8" fill="#c8c8c8" /><rect x="1.5" y="3.2" width="12.3" height="0.8" fill="#d8d8d8" /><rect x="10.3" y="6" width="4" height="0.8" fill="#d0d0d0" /><rect x="15.3" y="6" width="4" height="0.8" fill="#d0d0d0" /><path d="M7.5 11.5 L4.9 14.7 H6.5 V21.5 H8.5 V14.7 H10.1Z" fill="#fff"/><rect x="3" y="21.5" width="9" height="0.8" fill="#667" /><path d="M0 30 Q25 33 50 44 L50 49 Q25 40 0 38Z" fill="#c868b8" opacity="0.7"/><path d="M77 35 Q84 34 90 37 L88 39 Q82 37 77 37Z" fill="#9a6ab8" opacity="0.5"/><ellipse cx="61" cy="21" rx="10" ry="16" fill="url(#fw)" transform="rotate(30 61 21)"/><ellipse cx="56" cy="28" rx="6" ry="8" fill="#d8b0d8" opacity="0.35"/><circle cx="53" cy="12.2" r="2.6" fill="#e8c0c0" opacity="0.8"/><circle cx="68" cy="11" r="2" fill="#90d8e0" opacity="0.6"/><path d="M38 70 L40 46 L42 43 L44 46 L47 40 L49 36 L51 40 L54 33 L56 33 L58 28 L60 18 L62 28 L64 33 L66 33 L68 38 L70 35 L72 40 L75 44 L77 42 L79 48 L80 70Z" fill="#8a5a50"/><path d="M48 48 L52 42 L56 47 L59 38 L62 46 L66 41 L70 49 L68 62 L50 62Z" fill="#c09080" opacity="0.8"/><circle cx="48" cy="46" r="0.9" fill="#e03030"/></svg></div>
<!--/LAND-->
</body></html>
